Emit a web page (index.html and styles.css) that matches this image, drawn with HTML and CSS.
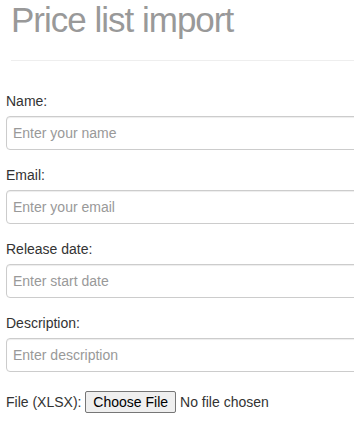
FILE: index.html
```html
<!DOCTYPE html>
<html lang="en">
<head>
  <meta charset="UTF-8" />
  <meta name="viewport" content="width=device-width, initial-scale=1.0" />
  <title>Price list import</title>
  <link rel="stylesheet" href="styles.css">
</head>
<body>
  <div class="page-header">
    <h1>Price list import</h1>
  </div>

  <form class="import-form">
    <div class="form-group">
      <label for="name">Name:</label>
      <input type="text" id="name" class="form-control" placeholder="Enter your name" />
    </div>
    <div class="form-group">
      <label for="email">Email:</label>
      <input type="email" id="email" class="form-control" placeholder="Enter your email" />
    </div>
    <div class="form-group">
      <label for="release">Release date:</label>
      <input type="text" id="release" class="form-control" placeholder="Enter start date" />
    </div>
    <div class="form-group">
      <label for="description">Description:</label>
      <input type="text" id="description" class="form-control" placeholder="Enter description" />
    </div>
    <div class="form-group file-group">
      <label for="file">File (XLSX):</label>
      <input type="file" id="file" accept=".xlsx" />
    </div>
  </form>
</body>
</html>
```

FILE: styles.css
```css
body {
  margin: 0;
  font-family: 'Liberation Sans', Arial, sans-serif;
  font-size: 14px;
  line-height: 20px;
  color: #333;
  background: #fff;
  overflow: hidden;
}

.page-header {
  margin: 0 0 0 11px;
  width: 360px;
  padding-bottom: 9px;
  border-bottom: 1px solid #eee;
}

h1 {
  margin: 2px 0 13px;
  font-size: 35px;
  line-height: 36px;
  letter-spacing: -1px;
  font-weight: normal;
  color: #999;
}

.import-form {
  margin: 30px 0 0 6px;
  width: 360px;
}

.form-group {
  margin-bottom: 15px;
}

label {
  display: block;
  margin-bottom: 5px;
  font-weight: normal;
}

.form-control {
  display: block;
  box-sizing: border-box;
  width: 100%;
  height: 34px;
  padding: 6px;
  font-family: 'Liberation Sans', Arial, sans-serif;
  font-size: 14px;
  color: #555;
  background: #fff;
  border: 1px solid #ccc;
  border-radius: 4px;
  box-shadow: inset 0 1px 1px rgba(0, 0, 0, 0.075);
}

.form-control::placeholder {
  color: #999;
}

.file-group {
  padding-top: 4px;
}

.file-group label {
  display: inline;
}

.file-group input {
  font-family: 'Liberation Sans', Arial, sans-serif;
  font-size: 14px;
  color: #333;
}

.file-group input::file-selector-button {
  font-family: 'Liberation Sans', Arial, sans-serif;
  font-size: 14px;
  color: #000;
  padding: 2px 7px;
  margin-right: 4px;
  background: #efefef;
  border: 1px solid #767676;
  border-radius: 2px;
}
```
